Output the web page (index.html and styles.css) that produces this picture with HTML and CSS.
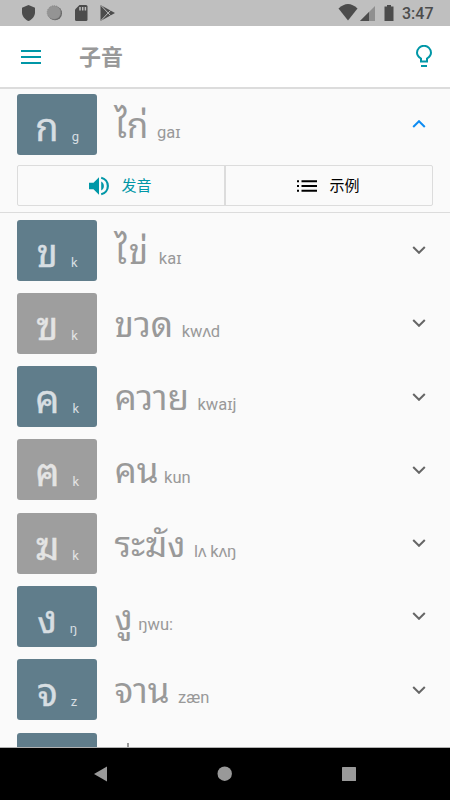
FILE: index.html
```html
<!DOCTYPE html>
<html lang="zh-CN">
<head>
    <meta charset="UTF-8">
    <meta name="viewport" content="width=device-width, initial-scale=1.0">
    <title>子音</title>
    <link rel="stylesheet" href="styles.css">
</head>
<body>
    <div class="status-bar">
        <svg class="status-left" width="120" height="26" viewBox="0 0 120 26">
            <path fill="#4c4c4c" d="M28.5 5l6.5 2.7v4.5c0 4-2.700 7.200-6.500 8.800-3.800-1.600-6.500-4.800-6.500-8.800V7.700z"/>
            <circle cx="55" cy="13.300" r="7" fill="#666"/>
            <circle cx="54" cy="12.500" r="6.800" fill="#949494" stroke="#858585" stroke-dasharray="1 1"/>
            <path fill="#4c4c4c" d="M79.500 5H86q1.500 0 1.500 1.500v13Q87.500 21 86 21H76.500Q75 21 75 19.500V9.500z"/>
            <path stroke="#bfbfbf" stroke-width="1.500" d="M80 7v3.500M82.700 7v3.500M85.400 7v3.500"/>
            <path fill="#4c4c4c" d="M100.500 5L115 13l-14.500 8z"/>
            <path fill="none" stroke="#bfbfbf" d="M101 5.500l9.500 10M101 20.500l9.500-10"/>
        </svg>
        <svg class="status-right" width="60" height="26" viewBox="0 0 60 26">
            <path fill="#4c4c4c" d="M.5 8.500Q10-0.500 19.500 8.500L10 20.500z"/>
            <path fill="#909090" d="M37 6v15H22z"/>
            <path fill="#4c4c4c" d="M31 12v9h-9z"/>
            <path fill="#4c4c4c" d="M49 5h4v1.500h2.500V21h-9V6.500H49z"/>
        </svg>
        <span class="clock">3:47</span>
    </div>

    <header class="header">
        <svg class="menu-icon" width="20" height="14" viewBox="0 0 20 14">
            <path stroke="#0097a7" stroke-width="2" d="M0 1h20M0 7h20M0 13h20"/>
        </svg>
        <h1>子音</h1>
        <svg class="bulb-icon" width="16" height="23" viewBox="0 0 16 23">
            <path fill="none" stroke="#0097a7" stroke-width="2" d="M5 16.500v-3C2.500 12 1 10.300 1 7.800a7 7 0 0 1 14 0c0 2.500-1.500 4.200-4 5.700v3z"/>
            <path stroke="#0097a7" stroke-width="2" d="M5 21h6"/>
        </svg>
    </header>

    <main class="list">
        <section class="item open">
            <div class="row">
                <div class="tile"><span class="letter">ก</span><span class="sound">g</span></div>
                <div class="word"><span class="thai">ไก่</span><span class="ipa">gaɪ</span></div>
                <svg class="chevron" width="14" height="8" viewBox="0 0 14 8"><path d="M1.200 7L7 1.200 12.800 7"/></svg>
            </div>
            <div class="actions">
                <button class="play">
                    <svg width="20" height="20" viewBox="0 0 20 20">
                        <path fill="#0097a7" d="M0 6.700h4.500L10 1.200v17.600l-5.500-5.500H0zM12.200 5.500c1.600.8 2.700 2.500 2.700 4.500s-1.100 3.700-2.700 4.500z"/>
                        <path fill="none" stroke="#0097a7" stroke-width="2.200" d="M12.200 1.700a8.500 8.500 0 0 1 0 16.600"/>
                    </svg>
                    <span>发音</span>
                </button>
                <button class="examples">
                    <svg width="20" height="12" viewBox="0 0 20 12">
                        <path stroke="#000" stroke-width="2" d="M0 1.200h2M4.500 1.200H20M0 6h2M4.500 6H20M0 10.800h2M4.500 10.800H20"/>
                    </svg>
                    <span>示例</span>
                </button>
            </div>
        </section>
        <section class="item">
            <div class="row">
                <div class="tile"><span class="letter">ข</span><span class="sound">k</span></div>
                <div class="word wide"><span class="thai">ไข่</span><span class="ipa">kaɪ</span></div>
                <svg class="chevron" width="14" height="8" viewBox="0 0 14 8"><path d="M1.200 1L7 6.800 12.800 1"/></svg>
            </div>
        </section>
        <section class="item">
            <div class="row">
                <div class="tile rare"><span class="letter">ฃ</span><span class="sound">k</span></div>
                <div class="word"><span class="thai">ขวด</span><span class="ipa">kwʌd</span></div>
                <svg class="chevron" width="14" height="8" viewBox="0 0 14 8"><path d="M1.200 1L7 6.800 12.800 1"/></svg>
            </div>
        </section>
        <section class="item">
            <div class="row">
                <div class="tile"><span class="letter">ค</span><span class="sound">k</span></div>
                <div class="word"><span class="thai">ควาย</span><span class="ipa">kwaɪj</span></div>
                <svg class="chevron" width="14" height="8" viewBox="0 0 14 8"><path d="M1.200 1L7 6.800 12.800 1"/></svg>
            </div>
        </section>
        <section class="item">
            <div class="row">
                <div class="tile rare"><span class="letter">ฅ</span><span class="sound">k</span></div>
                <div class="word tight"><span class="thai">คน</span><span class="ipa">kun</span></div>
                <svg class="chevron" width="14" height="8" viewBox="0 0 14 8"><path d="M1.200 1L7 6.800 12.800 1"/></svg>
            </div>
        </section>
        <section class="item">
            <div class="row">
                <div class="tile rare"><span class="letter">ฆ</span><span class="sound">k</span></div>
                <div class="word"><span class="thai">ระฆัง</span><span class="ipa">lʌ kʌŋ</span></div>
                <svg class="chevron" width="14" height="8" viewBox="0 0 14 8"><path d="M1.200 1L7 6.800 12.800 1"/></svg>
            </div>
        </section>
        <section class="item">
            <div class="row">
                <div class="tile"><span class="letter">ง</span><span class="sound">ŋ</span></div>
                <div class="word tight"><span class="thai">งู</span><span class="ipa">ŋwu:</span></div>
                <svg class="chevron" width="14" height="8" viewBox="0 0 14 8"><path d="M1.200 1L7 6.800 12.800 1"/></svg>
            </div>
        </section>
        <section class="item">
            <div class="row">
                <div class="tile"><span class="letter">จ</span><span class="sound">z</span></div>
                <div class="word"><span class="thai">จาน</span><span class="ipa">zæn</span></div>
                <svg class="chevron" width="14" height="8" viewBox="0 0 14 8"><path d="M1.200 1L7 6.800 12.800 1"/></svg>
            </div>
        </section>
        <section class="item">
            <div class="row">
                <div class="tile"></div>
                <div class="word"><span class="tone"></span></div>
            </div>
        </section>
    </main>

    <nav class="nav-bar">
        <svg width="450" height="52" viewBox="0 0 450 52">
            <path fill="#999" d="M107 18.500v15L94 26z"/>
            <circle cx="224.700" cy="25.700" r="7.200" fill="#999"/>
            <rect x="342" y="19" width="14" height="14" rx=".5" fill="#999"/>
        </svg>
    </nav>
</body>
</html>
```

FILE: styles.css
```css
* {
    box-sizing: border-box;
    margin: 0;
    padding: 0;
}

body {
    display: flex;
    flex-direction: column;
    width: 450px;
    height: 800px;
    overflow: hidden;
    background-color: #fafafa;
    font-family: Roboto, "Noto Sans", "Noto Sans CJK SC", sans-serif;
}

.status-bar {
    display: flex;
    flex: none;
    align-items: center;
    height: 26px;
    background-color: #bfbfbf;
}

.status-right {
    margin-left: 218px;
}

.clock {
    margin-left: 4px;
    font-size: 16px;
    font-weight: 500;
    line-height: 26px;
    padding-top: 2px;
    color: #4c4c4c;
}

.header {
    display: flex;
    flex: none;
    align-items: center;
    height: 63px;
    padding: 0 18px 0 21px;
    background-color: #fff;
    border-bottom: 2px solid #dcdcdc;
}

.header h1 {
    margin: 3px 0 0 38px;
    font-size: 22px;
    font-weight: 700;
    line-height: 32px;
    color: #999;
}

.bulb-icon {
    margin-left: auto;
}

.list {
    flex: 1;
    min-height: 0;
    overflow: hidden;
    border-bottom: 1px solid #b0b0b0;
}

.item {
    height: 73.3px;
    padding: 6.500px 17px 0 17.400px;
}

.item.open {
    height: 124px;
    padding-top: 4.500px;
    border-bottom: 1px solid #dcdcdc;
}

.row {
    display: flex;
    align-items: center;
    height: 61px;
}

.tile {
    display: flex;
    justify-content: center;
    align-items: baseline;
    flex: none;
    width: 79.600px;
    height: 61px;
    background-color: #607d8b;
    border-radius: 3px;
    line-height: 60px;
    color: #d7dee2;
}

.tile.rare {
    background-color: #9e9e9e;
    color: #e4e4e4;
}

.letter,
.thai {
    font-family: "Noto Sans Thai Looped", "Droid Sans Thai", "Noto Looped Thai", Loma, Waree, Garuda, "Noto Sans Thai", sans-serif;
}

.letter {
    font-size: 38px;
    -webkit-text-stroke: .4px;
}

.sound {
    margin-left: 13px;
    font-size: 13px;
}

.word {
    display: flex;
    align-items: baseline;
    flex: 1;
    height: 61px;
    margin-left: 17.500px;
    line-height: 57px;
    white-space: nowrap;
    color: #999;
}

.thai {
    font-size: 35px;
}

.ipa {
    margin-left: 8.500px;
    font-size: 16.500px;
}

.wide .thai {
    letter-spacing: 2px;
}

.tight .ipa {
    margin-left: 5.500px;
}

.tone {
    width: 1.500px;
    height: 8px;
    margin: 10px 0 0 13px;
    background-color: #999;
}

.chevron {
    flex: none;
    margin-right: 7px;
}

.chevron path {
    fill: none;
    stroke: #666;
    stroke-width: 2;
}

.open .chevron path {
    stroke: #0d8bf2;
}

.actions {
    display: flex;
    width: 416px;
    height: 41px;
    margin-top: 10.800px;
    border: 1px solid #dcdcdc;
    border-radius: 2px;
}

.actions button {
    display: flex;
    flex: 1;
    align-items: center;
    justify-content: center;
    gap: 12px;
    padding-right: 2px;
    border: none;
    background: none;
    font-family: "Noto Sans CJK SC", sans-serif;
    font-size: 15px;
    font-weight: 400;
    line-height: 20px;
    color: #000;
}

.actions button span {
    margin-top: -2px;
}

.actions .play {
    border-right: 2px solid #dcdcdc;
    color: #0097a7;
}

.nav-bar {
    flex: none;
    height: 52px;
    background-color: #000;
}
```
